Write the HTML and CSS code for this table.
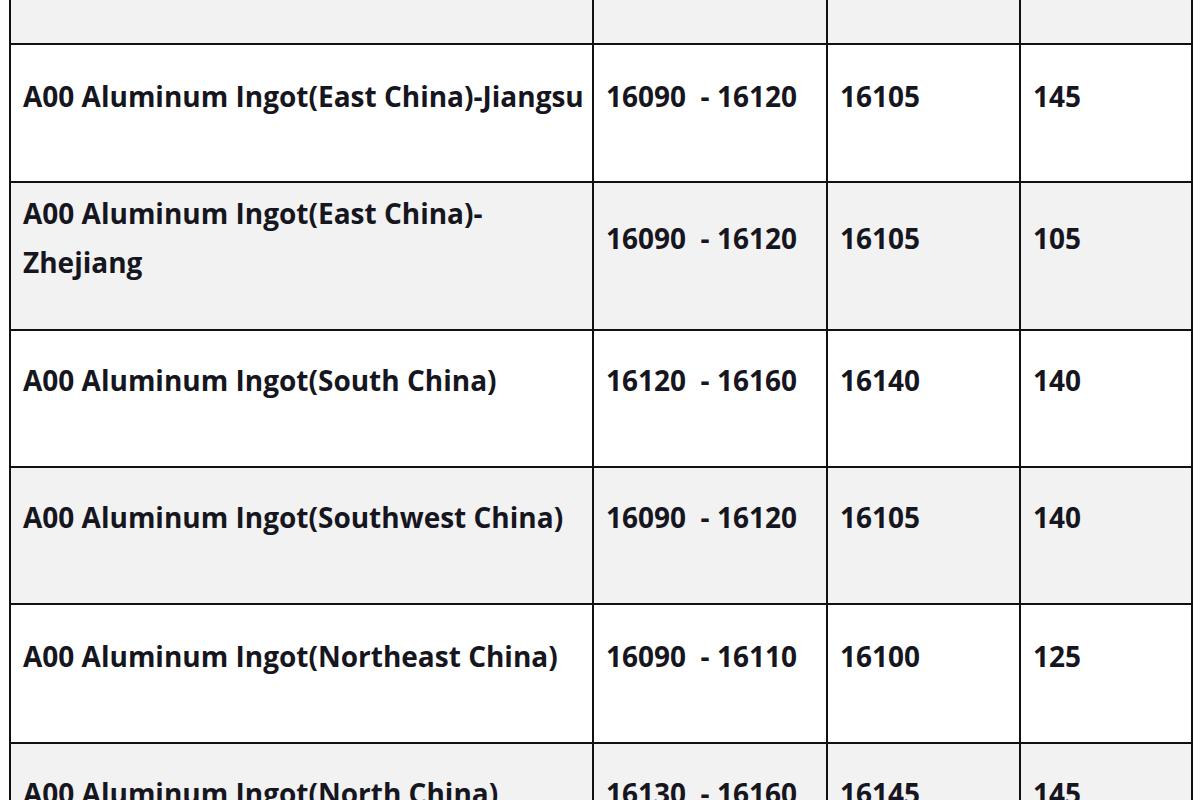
FILE: index.html
```html
<!DOCTYPE html>
<html>
<head>
<meta charset="utf-8">
<link rel="stylesheet" href="styles.css">
</head>
<body>
<table class="prices">
  <colgroup>
    <col class="c-name"><col class="c-range"><col class="c-avg"><col class="c-chg">
  </colgroup>
  <tr class="r-head alt"><td></td><td></td><td></td><td></td></tr>
  <tr class="r1"><td>A00 Aluminum Ingot(East China)-Jiangsu</td><td>16090&nbsp; - 16120</td><td>16105</td><td>145</td></tr>
  <tr class="r2 alt two"><td>A00 Aluminum Ingot(East China)-<br>Zhejiang</td><td class="mid">16090&nbsp; - 16120</td><td class="mid">16105</td><td class="mid">105</td></tr>
  <tr class="r3"><td>A00 Aluminum Ingot(South China)</td><td>16120&nbsp; - 16160</td><td>16140</td><td>140</td></tr>
  <tr class="r4 alt"><td>A00 Aluminum Ingot(Southwest China)</td><td>16090&nbsp; - 16120</td><td>16105</td><td>140</td></tr>
  <tr class="r5"><td>A00 Aluminum Ingot(Northeast China)</td><td>16090&nbsp; - 16110</td><td>16100</td><td>125</td></tr>
  <tr class="r6 alt"><td>A00 Aluminum Ingot(North China)</td><td>16130&nbsp; - 16160</td><td>16145</td><td>145</td></tr>
</table>
</body>
</html>
```
FILE: styles.css
```css
html, body {
  margin: 0;
  padding: 0;
  background: #ffffff;
  overflow: hidden;
}

.prices {
  border-collapse: collapse;
  table-layout: fixed;
  width: 1182px;
  margin: -60px 0 0 9px;
  font-family: "Open Sans", Lato, sans-serif;
  font-weight: 700;
  font-size: 28px;
  line-height: 49px;
  color: #161620;
}

.c-name { width: 583px; }
.c-range { width: 234px; }
.c-avg { width: 193px; }
.c-chg { width: 172px; }

.prices td {
  box-sizing: border-box;
  border: 2px solid #111111;
  padding: 25px 8px 0 12px;
  vertical-align: top;
  white-space: nowrap;
  overflow: hidden;
}

.prices .alt td { background: #f2f2f2; }

.r-head td { height: 103px; }
.r1 td { height: 138px; padding-top: 27px; }
.r2 td { height: 148px; padding-top: 6px; }
.r2 td.mid { padding-top: 31px; }
.r3 td { height: 137px; }
.r4 td { height: 137px; }
.r5 td { height: 139px; padding-top: 27px; }
.r6 td { height: 138px; }
```
